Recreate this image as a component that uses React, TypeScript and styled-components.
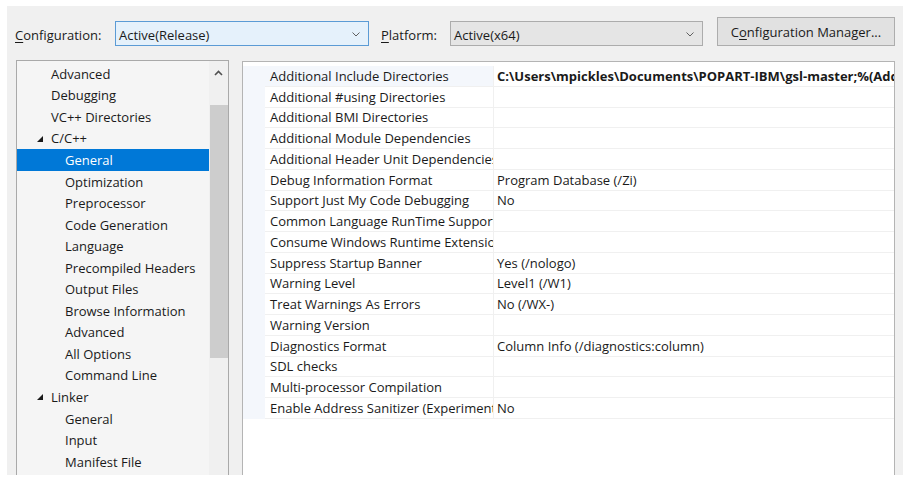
import React from "react";
import styled, { createGlobalStyle } from "styled-components";

const Global = createGlobalStyle`
  html, body { margin: 0; padding: 0; background: #ffffff; }
  body { font-family: "Open Sans", "Noto Sans", sans-serif; font-size: 13px; color: #1a1a1a; }
`;

const Dialog = styled.div`
  margin: 6px 0 0 7px;
  width: 896px;
  height: 469px;
  background: #f0f0f0;
  overflow: hidden;
  display: flex;
  flex-direction: column;
`;

const TopBar = styled.div`
  display: flex;
  align-items: center;
  height: 29px;
  margin-top: 13px;
  padding-left: 8px;
`;

const Label = styled.span<{ $w: number }>`
  box-sizing: border-box;
  width: ${(p) => p.$w}px;
  padding-top: 4px;
  white-space: nowrap;
  color: #1a1a1a;
`;

const U = styled.span`
  text-decoration: underline;
  text-underline-offset: 2px;
`;

const Combo = styled.div<{ $active?: boolean; $w: number }>`
  box-sizing: border-box;
  width: ${(p) => p.$w}px;
  height: 25px;
  margin-top: 1px;
  margin-right: ${(p) => (p.$active ? 12 : 14)}px;
  display: flex;
  align-items: center;
  justify-content: space-between;
  padding: 3px 8px 0 3px;
  background: ${(p) => (p.$active ? "#e5f1fb" : "#e5e5e5")};
  border: 1px solid ${(p) => (p.$active ? "#5b9bd5" : "#acacac")};
`;

const Button = styled.div`
  box-sizing: border-box;
  width: 178px;
  height: 29px;
  margin-top: -2px;
  padding-top: 1px;
  display: flex;
  align-items: center;
  justify-content: center;
  background: #e1e1e1;
  border: 1px solid #adadad;
`;

const Panels = styled.div`
  display: flex;
  align-items: flex-start;
  margin-top: 14px;
  padding-left: 9px;
  gap: 13px;
`;

const Tree = styled.div`
  box-sizing: border-box;
  width: 213px;
  height: 440px;
  border: 1px solid #a9a9a9;
  background: #f5f5f5;
  display: flex;
`;

const TreeList = styled.div`
  flex: 1;
  padding-top: 2px;
`;

const TreeRow = styled.div<{ $level: number; $selected?: boolean }>`
  height: 21.55px;
  display: flex;
  align-items: center;
  padding-left: ${(p) => (p.$level === 0 ? 34 : 48)}px;
  position: relative;
  white-space: nowrap;
  background: ${(p) => (p.$selected ? "#0078d7" : "transparent")};
  color: ${(p) => (p.$selected ? "#ffffff" : "#1a1a1a")};
`;

const Expander = styled.svg`
  position: absolute;
  left: 20px;
  top: 8px;
`;

const ScrollBar = styled.div`
  width: 19px;
  background: #f0f0f0;
  display: flex;
  flex-direction: column;
  align-items: center;
`;

const ScrollArrow = styled.div`
  height: 44px;
  width: 100%;
  display: flex;
  justify-content: center;
  padding-top: 9px;
  box-sizing: border-box;
`;

const Thumb = styled.div`
  width: 18px;
  margin-left: 1px;
  height: 253px;
  background: #cdcdcd;
`;

const Grid = styled.div`
  box-sizing: border-box;
  width: 653px;
  height: 440px;
  margin-top: 1px;
  padding-top: 4px;
  background: #ffffff;
  border: 1px solid #b4b4b4;
`;

const GridRow = styled.div`
  display: flex;
  height: 20.75px;
`;

const Gutter = styled.div`
  width: 22px;
  flex: none;
  background: #f4f7fc;
`;

const NameCell = styled.div<{ $focus?: boolean }>`
  box-sizing: border-box;
  width: 229px;
  flex: none;
  padding-left: 5px;
  display: flex;
  align-items: center;
  overflow: hidden;
  white-space: nowrap;
  background: ${(p) => (p.$focus ? "#f4f7fc" : "#ffffff")};
  border-bottom: 1px solid #f0f0f0;
  border-right: 1px solid #f0f0f0;
`;

const ValueCell = styled.div<{ $bold?: boolean }>`
  box-sizing: border-box;
  flex: 1;
  min-width: 0;
  padding-left: 3px;
  display: flex;
  align-items: center;
  overflow: hidden;
  white-space: nowrap;
  font-weight: ${(p) => (p.$bold ? 700 : 400)};
  border-bottom: 1px solid #f0f0f0;
`;

const ChevronDown = () => (
  <svg width="8" height="5" viewBox="0 0 8 5">
    <path d="M0.5 0.5 L4 4 L7.5 0.5" fill="none" stroke="#606060" strokeWidth="1" />
  </svg>
);

const ChevronUp = () => (
  <svg width="9" height="6" viewBox="0 0 9 6">
    <path d="M1 5 L4.5 1.5 L8 5" fill="none" stroke="#505050" strokeWidth="1.6" />
  </svg>
);

const Triangle = () => (
  <Expander width="6" height="6" viewBox="0 0 6 6">
    <polygon points="6,0 6,6 0,6" fill="#1a1a1a" />
  </Expander>
);

type TreeItem = { label: string; level: number; expanded?: boolean; selected?: boolean };

const treeItems: TreeItem[] = [
  { label: "Advanced", level: 0 },
  { label: "Debugging", level: 0 },
  { label: "VC++ Directories", level: 0 },
  { label: "C/C++", level: 0, expanded: true },
  { label: "General", level: 1, selected: true },
  { label: "Optimization", level: 1 },
  { label: "Preprocessor", level: 1 },
  { label: "Code Generation", level: 1 },
  { label: "Language", level: 1 },
  { label: "Precompiled Headers", level: 1 },
  { label: "Output Files", level: 1 },
  { label: "Browse Information", level: 1 },
  { label: "Advanced", level: 1 },
  { label: "All Options", level: 1 },
  { label: "Command Line", level: 1 },
  { label: "Linker", level: 0, expanded: true },
  { label: "General", level: 1 },
  { label: "Input", level: 1 },
  { label: "Manifest File", level: 1 },
];

type Prop = { name: string; value?: string; bold?: boolean };

const props: Prop[] = [
  { name: "Additional Include Directories", value: "C:\\Users\\mpickles\\Documents\\POPART-IBM\\gsl-master;%(AdditionalIncludeDirectories)", bold: true },
  { name: "Additional #using Directories" },
  { name: "Additional BMI Directories" },
  { name: "Additional Module Dependencies" },
  { name: "Additional Header Unit Dependencies" },
  { name: "Debug Information Format", value: "Program Database (/Zi)" },
  { name: "Support Just My Code Debugging", value: "No" },
  { name: "Common Language RunTime Support" },
  { name: "Consume Windows Runtime Extension" },
  { name: "Suppress Startup Banner", value: "Yes (/nologo)" },
  { name: "Warning Level", value: "Level1 (/W1)" },
  { name: "Treat Warnings As Errors", value: "No (/WX-)" },
  { name: "Warning Version" },
  { name: "Diagnostics Format", value: "Column Info (/diagnostics:column)" },
  { name: "SDL checks" },
  { name: "Multi-processor Compilation" },
  { name: "Enable Address Sanitizer (Experimental Feature)", value: "No" },
];

export default function App() {
  return (
    <>
      <Global />
      <Dialog>
        <TopBar>
          <Label $w={100}>
            <U>C</U>onfiguration:
          </Label>
          <Combo $active $w={254}>
            <span>Active(Release)</span>
            <ChevronDown />
          </Combo>
          <Label $w={69}>
            <U>P</U>latform:
          </Label>
          <Combo $w={253}>
            <span>Active(x64)</span>
            <ChevronDown />
          </Combo>
          <Button>
            <span>
              C<U>o</U>nfiguration Manager...
            </span>
          </Button>
        </TopBar>
        <Panels>
          <Tree>
            <TreeList>
              {treeItems.map((t, i) => (
                <TreeRow key={i} $level={t.level} $selected={t.selected}>
                  {t.expanded && <Triangle />}
                  {t.label}
                </TreeRow>
              ))}
            </TreeList>
            <ScrollBar>
              <ScrollArrow>
                <ChevronUp />
              </ScrollArrow>
              <Thumb />
            </ScrollBar>
          </Tree>
          <Grid>
            {props.map((p, i) => (
              <GridRow key={i}>
                <Gutter />
                <NameCell $focus={i === 0}>{p.name}</NameCell>
                <ValueCell $bold={p.bold}>{p.value ?? ""}</ValueCell>
              </GridRow>
            ))}
          </Grid>
        </Panels>
      </Dialog>
    </>
  );
}
